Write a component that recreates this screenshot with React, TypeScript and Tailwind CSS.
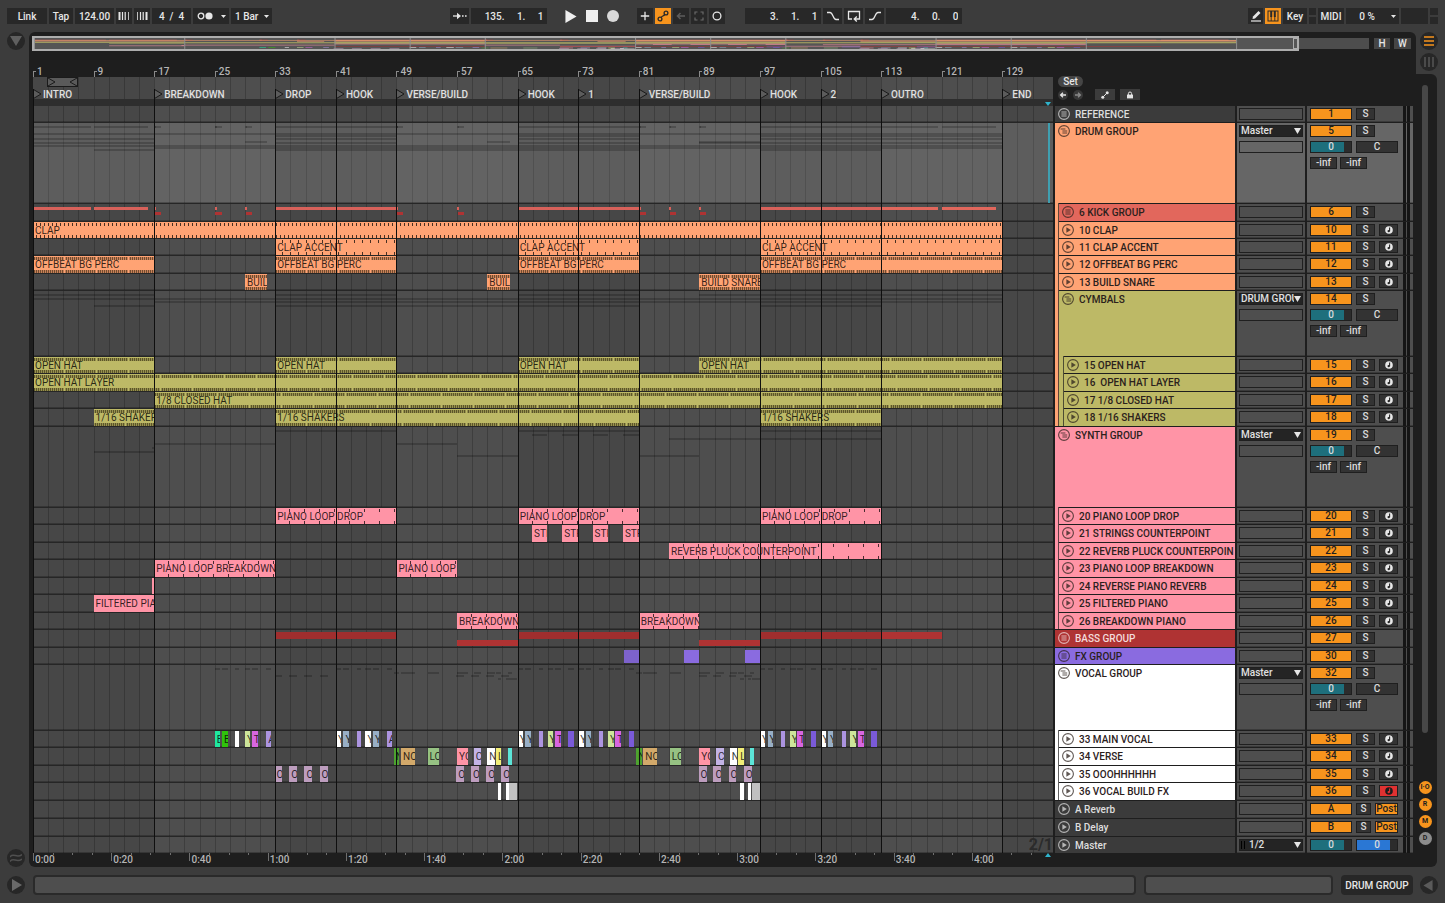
import { useState } from "react";
import type { ReactNode } from "react";
import clsx from "clsx";

const TOTAL_BARS = 134.7; // bars visible across the timeline
const BARS_PER_SECOND = 124 / 60 / 4;

const ORANGE = "#ffa374";
const OLIVE = "#bdb966";
const PINK = "#ff94a6";
const RED = "#af3333";
const RED_DIM = "#a02e2e";
const VIOLET = "#8a6be0";
const LILAC = "#bd9dbe";
const LAVENDER = "#ac94e0";
const STEEL = "#98afc6";
const LIME = "#cde59a";
const MAGENTA = "#d866e0";

type TickKind = "half" | "bar" | "two" | "dense";

type Clip = {
  from: number;
  to: number;
  label?: string;
  color?: string;
  // thin clips inside a folded group
  slot?: "kickHigh" | "kickLow" | "bassHigh" | "bassLow" | "fx";
};

type Track = {
  id: string;
  name: string;
  color: string;
  text?: string;
  height: string;
  kind: "folded" | "group" | "track" | "return" | "master";
  parents?: string[];
  selected?: boolean;
  output?: string;
  number: string;
  armed?: boolean;
  ticks?: TickKind;
  clips?: Clip[];
  ghosts?: [string, number][];
};

const spans = (label: string, list: [number, number][]): Clip[] => list.map(([from, to]) => ({ from, to, label }));

const kick = (bar: number): Clip[] => [
  { from: bar, to: bar + 0.25, slot: "kickHigh", color: "#d8615a" },
  { from: bar + 0.1, to: bar + 0.9, slot: "kickLow", color: RED },
];

const verse = (s: number): Clip[] => [
  { from: s - 0.35, to: s + 0.4, label: "N", color: "#4da32f" },
  { from: s + 0.6, to: s + 2.4, label: "NO", color: "#d3a96a" },
  { from: s + 4.1, to: s + 5.6, label: "LO", color: "#96c283" },
  { from: s + 8, to: s + 9.4, label: "YO", color: PINK },
  { from: s + 10.2, to: s + 11.2, label: "C", color: "#c3b3e6" },
  { from: s + 12, to: s + 12.95, label: "N", color: "#ffffff" },
  { from: s + 13.15, to: s + 13.85, label: "L", color: "#f2ee78" },
  { from: s + 14.7, to: s + 15.2, color: "#5ce5d8" },
];

const hook = (s: number): Clip[] => [
  { from: s, to: s + 0.7, label: "Y", color: "#ffffff" },
  { from: s + 1, to: s + 1.7, label: "Y", color: STEEL },
  { from: s + 2.8, to: s + 3.3, color: LAVENDER },
  { from: s + 3.95, to: s + 4.7, label: "Y", color: LIME },
  { from: s + 4.9, to: s + 5.7, label: "T", color: MAGENTA },
  { from: s + 6.7, to: s + 7.4, color: "#7a5ad8" },
];

const oohs = (s: number): Clip[] =>
  [0, 1.95, 3.95, 5.95].map((d) => ({ from: s - 0.1 + d, to: s + 0.95 + d, label: "O", color: LILAC }));

const buildFx = (s: number): Clip[] => [
  { from: s, to: s + 0.45, color: "#ffffff" },
  { from: s + 1, to: s + 1.4, color: "#ffffff" },
  { from: s + 1.5, to: s + 2.55, color: "#c0c0c0" },
];

const D = [ORANGE];
const C = [ORANGE, OLIVE];
const S = [PINK];
const V = ["#ffffff"];

const tracks: Track[] = [
  { id: "ref", name: "REFERENCE", color: "#3b3b3b", text: "#dedede", height: "h-[16px]", kind: "folded", number: "1" },
  {
    id: "drum", name: "DRUM GROUP", color: ORANGE, height: "h-[81px]", kind: "group", selected: true, output: "Master", number: "5",
    ghosts: [["kick", 3], ["clap", 10], ["accent", 12], ["offbeat", 15], ["snare", 18], ["open", 19], ["layer", 22], ["closed", 24], ["shakers", 26]],
  },
  {
    id: "kick", name: "6 KICK GROUP", color: "#e2675c", height: "h-[18px]", kind: "folded", parents: D, number: "6",
    clips: [
      { from: 1, to: 8.65, slot: "kickHigh", color: "#d8615a" },
      { from: 9, to: 16.2, slot: "kickHigh", color: "#d8615a" },
      ...kick(17), ...kick(25), ...kick(29),
      { from: 33, to: 49.2, slot: "kickHigh", color: "#d8615a" },
      ...kick(49), ...kick(57),
      { from: 65, to: 81.2, slot: "kickHigh", color: "#d8615a" },
      ...kick(81), ...kick(85), ...kick(89),
      { from: 97, to: 113, slot: "kickHigh", color: "#d8615a" },
      { from: 113, to: 120.5, slot: "kickHigh", color: "#e2675c" },
      { from: 121, to: 128.2, slot: "kickHigh", color: "#e2675c" },
    ],
  },
  { id: "clap", name: "10 CLAP", color: ORANGE, height: "h-[17px]", kind: "track", parents: D, number: "10", ticks: "half", clips: spans("CLAP", [[1, 129]]) },
  { id: "accent", name: "11 CLAP ACCENT", color: ORANGE, height: "h-[17px]", kind: "track", parents: D, number: "11", ticks: "bar", clips: spans("CLAP ACCENT", [[33, 49], [65, 81], [97, 129]]) },
  { id: "offbeat", name: "12 OFFBEAT BG PERC", color: ORANGE, height: "h-[18px]", kind: "track", parents: D, number: "12", ticks: "dense", clips: spans("OFFBEAT BG PERC", [[1, 17], [33, 49], [65, 81], [97, 129]]) },
  { id: "snare", name: "13 BUILD SNARE", color: ORANGE, height: "h-[17px]", kind: "track", parents: D, number: "13", ticks: "dense", clips: [...spans("BUIL", [[29, 31.9], [61, 64]]), ...spans("BUILD SNARE", [[89, 97]])] },
  {
    id: "cymbals", name: "CYMBALS", color: OLIVE, height: "h-[66px]", kind: "group", parents: D, output: "DRUM GROUP", number: "14",
    ghosts: [["open", 3], ["layer", 7], ["closed", 10], ["shakers", 14]],
  },
  { id: "open", name: "15 OPEN HAT", color: OLIVE, height: "h-[17px]", kind: "track", parents: C, number: "15", ticks: "dense", clips: spans("OPEN HAT", [[1, 17], [33, 49], [65, 81], [89, 129]]) },
  { id: "layer", name: "16  OPEN HAT LAYER", color: OLIVE, height: "h-[18px]", kind: "track", parents: C, number: "16", ticks: "dense", clips: spans("OPEN HAT LAYER", [[1, 129]]) },
  { id: "closed", name: "17 1/8 CLOSED HAT", color: OLIVE, height: "h-[17px]", kind: "track", parents: C, number: "17", ticks: "dense", clips: spans("1/8 CLOSED HAT", [[17, 129]]) },
  { id: "shakers", name: "18 1/16 SHAKERS", color: OLIVE, height: "h-[18px]", kind: "track", parents: C, number: "18", ticks: "dense", clips: spans("1/16 SHAKERS", [[9, 17], [33, 81], [97, 113]]) },
  {
    id: "synth", name: "SYNTH GROUP", color: PINK, height: "h-[81px]", kind: "group", output: "Master", number: "19",
    ghosts: [["drop", 3], ["strings", 7], ["pluck", 11], ["breakdown", 16], ["reverse", 20], ["filtered", 24], ["piano", 28]],
  },
  { id: "drop", name: "20 PIANO LOOP DROP", color: PINK, height: "h-[17px]", kind: "track", parents: S, number: "20", ticks: "two", clips: spans("PIANO LOOP DROP", [[33, 49], [65, 81], [97, 113]]) },
  { id: "strings", name: "21 STRINGS COUNTERPOINT", color: PINK, height: "h-[18px]", kind: "track", parents: S, number: "21", clips: spans("STR", [[66.9, 68.9], [70.9, 73], [74.9, 76.9], [78.9, 81]]) },
  { id: "pluck", name: "22 REVERB PLUCK COUNTERPOIN", color: PINK, height: "h-[17px]", kind: "track", parents: S, number: "22", ticks: "two", clips: spans("REVERB PLUCK COUNTERPOINT", [[85, 113]]) },
  { id: "breakdown", name: "23 PIANO LOOP BREAKDOWN", color: PINK, height: "h-[18px]", kind: "track", parents: S, number: "23", ticks: "two", clips: [...spans("PIANO LOOP BREAKDOWN", [[17, 33]]), ...spans("PIANO LOOP", [[49, 57]])] },
  { id: "reverse", name: "24 REVERSE PIANO REVERB", color: PINK, height: "h-[17px]", kind: "track", parents: S, number: "24", clips: [{ from: 16.7, to: 17 }] },
  { id: "filtered", name: "25 FILTERED PIANO", color: PINK, height: "h-[18px]", kind: "track", parents: S, number: "25", clips: spans("FILTERED PIA", [[9, 17]]) },
  { id: "piano", name: "26 BREAKDOWN PIANO", color: PINK, height: "h-[17px]", kind: "track", parents: S, number: "26", ticks: "two", clips: spans("BREAKDOWN", [[57, 65], [81, 89]]) },
  {
    id: "bass", name: "BASS GROUP", color: RED, text: "#f3dcdc", height: "h-[18px]", kind: "folded", number: "27",
    clips: [
      { from: 33, to: 49, slot: "bassHigh", color: RED_DIM },
      { from: 57, to: 65, slot: "bassLow", color: RED },
      { from: 65, to: 81, slot: "bassHigh", color: RED_DIM },
      { from: 89, to: 97, slot: "bassLow", color: RED },
      { from: 97, to: 113, slot: "bassHigh", color: RED_DIM },
      { from: 113, to: 121, slot: "bassHigh", color: RED },
    ],
  },
  {
    id: "fx", name: "FX GROUP", color: VIOLET, height: "h-[17px]", kind: "folded", number: "30",
    clips: [
      { from: 79, to: 81, slot: "fx", color: "#7d62cc" },
      { from: 87, to: 89, slot: "fx", color: VIOLET },
      { from: 95, to: 97, slot: "fx", color: VIOLET },
    ],
  },
  {
    id: "vocal", name: "VOCAL GROUP", color: "#ffffff", height: "h-[66px]", kind: "group", output: "Master", number: "32",
    ghosts: [["main", 3], ["verse", 7], ["oooh", 10], ["vfx", 13]],
  },
  {
    id: "main", name: "33 MAIN VOCAL", color: "#ffffff", height: "h-[17px]", kind: "track", parents: V, number: "33",
    clips: [
      { from: 25, to: 25.7, label: "E", color: "#1fe8a0" },
      { from: 25.95, to: 26.7, label: "E", color: "#2fc40a" },
      { from: 27.7, to: 28.15, color: "#ffffff" },
      { from: 29, to: 29.7, label: "Y", color: LIME },
      { from: 29.9, to: 30.65, label: "T", color: MAGENTA },
      { from: 31.8, to: 32.4, label: "A", color: LAVENDER },
      { from: 41, to: 41.7, label: "Y", color: "#ffffff" },
      { from: 42, to: 42.7, label: "Y", color: STEEL },
      { from: 43.8, to: 44.3, color: LAVENDER },
      { from: 44.9, to: 45.7, label: "Y", color: "#ffffff" },
      { from: 45.9, to: 46.7, label: "Y", color: STEEL },
      { from: 47.7, to: 48.4, label: "A", color: LAVENDER },
      ...hook(65), ...hook(73), ...hook(97), ...hook(105),
    ],
  },
  { id: "verse", name: "34 VERSE", color: "#ffffff", height: "h-[18px]", kind: "track", parents: V, number: "34", clips: [...verse(49), ...verse(81)] },
  { id: "oooh", name: "35 OOOHHHHHH", color: "#ffffff", height: "h-[17px]", kind: "track", parents: V, number: "35", clips: [...oohs(33), ...oohs(57), ...oohs(89)] },
  { id: "vfx", name: "36 VOCAL BUILD FX", color: "#ffffff", height: "h-[18px]", kind: "track", parents: V, number: "36", armed: true, clips: [...buildFx(62.4), ...buildFx(94.4)] },
  { id: "a", name: "A Reverb", color: "#3b3b3b", text: "#dedede", height: "h-[18px]", kind: "return", number: "A" },
  { id: "b", name: "B Delay", color: "#3b3b3b", text: "#dedede", height: "h-[18px]", kind: "return", number: "B" },
  { id: "master", name: "Master", color: "#3b3b3b", text: "#dedede", height: "h-[17px]", kind: "master", number: "0" },
];

const locators: [number, string][] = [
  [1, "INTRO"], [17, "BREAKDOWN"], [33, "DROP"], [41, "HOOK"], [49, "VERSE/BUILD"], [65, "HOOK"],
  [73, "1"], [81, "VERSE/BUILD"], [97, "HOOK"], [105, "2"], [113, "OUTRO"], [129, "END"],
];

const darkBands: [number, number][] = [[1, 17], [33, 49], [65, 81], [97, 113], [129, 1 + TOTAL_BARS]];
const gridBars = Array.from({ length: 67 }, (_, i) => 3 + i * 2).filter((b) => b < TOTAL_BARS);
const rulerBars = Array.from({ length: 17 }, (_, i) => 1 + i * 8);
const seconds = Array.from({ length: 52 }, (_, i) => i * 5);

const width = (bars: number) => `${(bars / TOTAL_BARS) * 100}%`;
const at = (bar: number) => width(bar - 1);

/* ---------- icons ---------- */

function TrackIcon({ kind }: { kind: Track["kind"] }) {
  return (
    <svg viewBox="0 0 12 12" className="size-3 shrink-0 opacity-75" fill="none" stroke="currentColor">
      <circle cx="6" cy="6" r="5.4" strokeWidth="1.1" />
      {kind === "folded" && <path d="M3.4 4h5.2M3.4 6h5.2M3.4 8h5.2" strokeWidth="1.1" />}
      {kind === "group" && <path d="M2.6 4h4.8M4.4 6h4.8M4.4 8h4.8" strokeWidth="1.1" />}
      {kind !== "folded" && kind !== "group" && <path d="M4.4 3.3L8.8 6L4.4 8.7z" fill="currentColor" stroke="none" />}
    </svg>
  );
}

function NoteIcon({ dark }: { dark?: boolean }) {
  return (
    <svg viewBox="0 0 8 8" className="size-2">
      <circle cx="4" cy="4" r="3.8" fill={dark ? "#1c1c1c" : "#e8e8e8"} />
      <path d="M4.6 1.6v3.6" stroke={dark ? "#e03131" : "#262626"} strokeWidth="1.1" />
      <circle cx="3.7" cy="5.1" r="1.2" fill={dark ? "#e03131" : "#262626"} />
    </svg>
  );
}

function Caret({ className }: { className?: string }) {
  return (
    <svg viewBox="0 0 8 7" preserveAspectRatio="none" className={clsx("pointer-events-none absolute", className)}>
      <path d="M0 0h8L4 7z" fill="#e6e6e6" />
    </svg>
  );
}

/* ---------- transport bar ---------- */

function BarButton({ label, className, children }: { label?: string; className: string; children?: ReactNode }) {
  return (
    <button aria-label={label} className={clsx("flex h-4 shrink-0 items-center justify-center", className)}>
      {children}
    </button>
  );
}

function BarInput({ label, value, className }: { label: string; value: string; className: string }) {
  return <input aria-label={label} defaultValue={value} className={clsx("h-4 shrink-0 bg-[#282828] outline-none", className)} />;
}

const stroke = { fill: "none", stroke: "#e6e6e6", strokeWidth: 1.3 };

function Transport() {
  return (
    <header className="flex h-8 items-center px-[7px] text-[#e6e6e6]">
      <div className="flex gap-[2px]">
        <BarButton className="w-10 bg-[#282828]">Link</BarButton>
        <BarButton className="w-6 bg-[#282828]">Tap</BarButton>
        <BarInput label="Tempo" value="124.00" className="w-[39px] text-center" />
        <BarButton label="Nudge down" className="w-4 bg-[#282828]">
          <svg viewBox="0 0 12 10" className="h-[10px] w-3" stroke="#e6e6e6">
            <path d="M1.5 1v8" strokeWidth="2" /><path d="M4.5 1v8M7.2 1v8" strokeWidth="1.2" /><path d="M10.5 1v8" strokeWidth=".8" />
          </svg>
        </BarButton>
        <BarButton label="Nudge up" className="w-4 bg-[#282828]">
          <svg viewBox="0 0 12 10" className="h-[10px] w-3" stroke="#e6e6e6">
            <path d="M1.5 1v8" strokeWidth=".8" /><path d="M4.5 1v8M7.2 1v8" strokeWidth="1.2" /><path d="M10.5 1v8" strokeWidth="2" />
          </svg>
        </BarButton>
        <BarInput label="Time signature" value="4  /  4" className="w-[39px] text-center" />
        <BarButton label="Metronome" className="relative w-9 bg-[#282828]">
          <svg viewBox="0 0 16 8" className="mr-3 h-2 w-4">
            <circle cx="4" cy="4" r="2.8" {...stroke} /><circle cx="12" cy="4" r="3.6" fill="#e6e6e6" />
          </svg>
          <Caret className="top-[7px] right-[3px] h-[3px] w-[5px]" />
        </BarButton>
        <div className="relative">
          <select aria-label="Quantization" className="h-4 w-[41px] appearance-none bg-[#282828] pl-1 outline-none">
            <option>1 Bar</option>
          </select>
          <Caret className="top-[7px] right-[3px] h-[3px] w-[5px]" />
        </div>
      </div>
      <div className="flex-5" />
      <div className="flex items-center gap-[2px]">
        <BarButton label="Follow" className="w-[19px] bg-[#282828]">
          <svg viewBox="0 0 14 8" className="h-2 w-[14px]" {...stroke}>
            <path d="M0 4h4" /><path d="M4 .8L8 4L4 7.2z" fill="#e6e6e6" stroke="none" /><path d="M9 4h1.6M12 4h1.6" />
          </svg>
        </BarButton>
        <BarInput label="Arrangement position" value="135.     1.     1" className="w-[76px] pr-1 text-right" />
        <BarButton label="Play" className="ml-[14px] w-4">
          <svg viewBox="0 0 12 14" className="h-[13px] w-3"><path d="M0 0l12 7L0 14z" fill="#efefef" /></svg>
        </BarButton>
        <BarButton label="Stop" className="ml-[3px] w-4"><span className="size-3 bg-[#efefef]" /></BarButton>
        <BarButton label="Record" className="ml-[3px] w-4"><span className="size-3 rounded-full bg-[#d9d9d9]" /></BarButton>
        <BarButton label="Overdub" className="ml-[14px] w-4 bg-[#282828]">
          <svg viewBox="0 0 10 10" className="size-[10px]" {...stroke}><path d="M5 .8v8.4M.8 5h8.4" /></svg>
        </BarButton>
        <BarButton label="Automation arm" className="w-4 bg-[#f7941d]">
          <svg viewBox="0 0 12 12" className="size-3" fill="none" stroke="#2a2a2a" strokeWidth="1.3">
            <circle cx="3" cy="9" r="1.9" /><circle cx="9" cy="3" r="1.9" /><path d="M4.2 7.6C5 5.4 6.6 6.6 7.7 4.4" />
          </svg>
        </BarButton>
        <BarButton label="Re-enable automation" className="w-4 bg-[#282828]">
          <svg viewBox="0 0 10 8" className="h-2 w-[10px]" fill="none" stroke="#5c5c5c" strokeWidth="1.5"><path d="M9 4H2M4.5 1L1.5 4l3 3" /></svg>
        </BarButton>
        <BarButton label="Capture" className="w-4 bg-[#282828]">
          <svg viewBox="0 0 10 10" className="size-[10px]" fill="none" stroke="#6a6a6a" strokeWidth="1.2">
            <path d="M1 3.5V1h2.5M6.5 1H9v2.5M9 6.5V9H6.5M3.5 9H1V6.5" />
          </svg>
        </BarButton>
        <BarButton label="Session record" className="w-4 bg-[#282828]">
          <svg viewBox="0 0 10 10" className="size-[10px]" {...stroke}><circle cx="5" cy="5" r="3.9" /></svg>
        </BarButton>
      </div>
      <div className="ml-5 flex gap-[2px]">
        <BarInput label="Loop start" value="3.     1.     1" className="w-[76px] pr-1 text-right" />
        <BarButton label="Punch in" className="w-[19px] bg-[#282828]">
          <svg viewBox="0 0 14 10" className="h-[10px] w-[14px]" {...stroke}><path d="M1 1.5h3c3 0 3 7 6 7h3" /></svg>
        </BarButton>
        <BarButton label="Loop" className="w-[19px] bg-[#282828]">
          <svg viewBox="0 0 14 12" className="h-3 w-[14px]" {...stroke}><path d="M5 9H1.5V1.5h11V9H8M9.8 6.6L7.2 9l2.6 2.4" /></svg>
        </BarButton>
        <BarButton label="Punch out" className="w-[19px] bg-[#282828]">
          <svg viewBox="0 0 14 10" className="h-[10px] w-[14px]" {...stroke}><path d="M1 8.5h3c3 0 3-7 6-7h3" /></svg>
        </BarButton>
        <BarInput label="Loop length" value="4.     0.     0" className="w-[76px] pr-1 text-right" />
      </div>
      <div className="flex-8" />
      <div className="flex gap-[2px]">
        <BarButton label="Draw mode" className="w-[15px] bg-[#282828]">
          <svg viewBox="0 0 12 12" className="size-3"><path d="M2.5 9L3 6.5L8.5 1l2 2L5 8.5z" fill="#e6e6e6" /><path d="M1 11h10" stroke="#e6e6e6" strokeWidth="1.2" /></svg>
        </BarButton>
        <BarButton label="Computer keyboard" className="w-4 bg-[#f7941d]">
          <svg viewBox="0 0 12 12" className="size-3" fill="none" stroke="#2a2a2a">
            <rect x="1" y="1" width="10" height="10" strokeWidth="1" /><path d="M4.2 1v6M7.8 1v6" strokeWidth="2" /><path d="M4.2 6v5M7.8 6v5" strokeWidth=".9" />
          </svg>
        </BarButton>
        <BarButton className="w-6 bg-[#282828]">Key</BarButton>
        <div className="flex w-[7px] flex-col gap-[2px]"><span className="flex-1 bg-[#282828]" /><span className="flex-1 bg-[#282828]" /></div>
        <BarButton className="w-[26px] bg-[#282828]">MIDI</BarButton>
        <BarButton className="relative w-[53px] bg-[#282828] pr-[11px]">
          0 %
          <Caret className="top-[7px] right-[3px] h-[3px] w-[5px]" />
        </BarButton>
        <div className="w-[27px] bg-[#282828]" />
        <div className="flex w-2 flex-col gap-[2px]"><span className="flex-1 bg-[#282828]" /><span className="flex-1 bg-[#282828]" /></div>
      </div>
    </header>
  );
}

/* ---------- overview ---------- */

function Overview() {
  const scale = 9.4;
  return (
    <div className="flex h-[15px] items-center pl-[3px]">
      <div className="relative h-[15px] flex-18 border-2 border-[#adadad] bg-[#555555]">
        <svg viewBox="0 0 1264 11" preserveAspectRatio="none" className="block h-full w-full">
          {tracks.map((t, i) =>
            t.clips?.map((c, j) => (
              <rect key={`${t.id}${j}`} x={(c.from - 1) * scale} y={1 + i * 0.36} width={(c.to - c.from) * scale} height="0.7" fill={c.color ?? t.color} opacity="0.7" />
            ))
          )}
          {locators.map(([bar]) => (
            <rect key={bar} x={(bar - 1) * scale} y="0" width="1" height="11" fill="#8f8f8f" />
          ))}
        </svg>
        <span className="absolute inset-y-0 right-0 w-1 border-y border-l border-[#adadad]" />
      </div>
      <div className="h-[11px] flex-1 bg-[#4d4d4d]" />
      <button className="ml-[5px] h-[11px] w-4 bg-[#454545] leading-[11px] text-[#e6e6e6]">H</button>
      <button className="mr-[5px] ml-1 h-[11px] w-[17px] bg-[#454545] leading-[11px] text-[#e6e6e6]">W</button>
    </div>
  );
}

/* ---------- timeline ---------- */

const tickBand: Record<TickKind, string> = {
  half: "bg-[repeating-linear-gradient(90deg,transparent_0_3px,#4a3022_3px_4px)]",
  bar: "bg-[repeating-linear-gradient(90deg,transparent_0_7px,#4a3022_7px_8px)]",
  two: "bg-[repeating-linear-gradient(90deg,transparent_0_14px,#4a2a30_14px_15px)]",
  dense:
    "bg-[repeating-linear-gradient(90deg,rgba(40,30,10,.25)_0_1px,rgba(40,30,10,.65)_1px_2px)] [mask-image:repeating-linear-gradient(90deg,#000_0_31px,transparent_31px_32px)]",
};

const slots = {
  kickHigh: "top-[3px] h-[3px]",
  kickLow: "top-[8px] h-[3px]",
  bassHigh: "top-[2px] h-[7px]",
  bassLow: "top-[10px] h-[6px]",
  fx: "top-[2px] h-[13px]",
};

function ClipBlock({ clip, track }: { clip: Clip; track: Track }) {
  return (
    <div
      className={clsx("absolute overflow-hidden font-normal whitespace-pre text-black/80", clip.slot ? slots[clip.slot] : "inset-y-0")}
      style={{ left: at(clip.from), width: width(clip.to - clip.from), backgroundColor: clip.color ?? track.color }}
    >
      {track.ticks && (
        <>
          <span className={clsx("absolute inset-x-0 top-[1px] h-[3px]", tickBand[track.ticks])} />
          <span className={clsx("absolute inset-x-0 bottom-0 h-[3px]", tickBand[track.ticks])} />
        </>
      )}
      {clip.label && <span className="relative block pt-px pl-[2px] leading-4">{clip.label}</span>}
    </div>
  );
}

function Lane({ track }: { track: Track }) {
  return (
    <div className={clsx("relative border-[#262626] shadow-[inset_0_-1px_rgba(0,0,0,.25)]", track.height, track.id !== "ref" && "border-t", track.selected && "bg-white/12")}>
      {track.ghosts?.map(([id, top]) =>
        tracks.find((t) => t.id === id)?.clips?.map((c, i) => (
          <span key={id + i} className="absolute h-[2px] bg-black/20" style={{ top, left: at(c.from), width: width(c.to - c.from) }} />
        ))
      )}
      {track.clips?.map((c, i) => <ClipBlock key={i} clip={c} track={track} />)}
      {track.selected && <span className="absolute inset-y-0 w-[2px] bg-[#3f9fb0]" style={{ left: at(135) }} />}
      {track.kind === "master" && <span className="absolute right-0 bottom-0 text-[16px] leading-4 font-bold text-[#2b2b2b]">2/1</span>}
    </div>
  );
}

function Timeline() {
  return (
    <section aria-label="Arrangement" className="min-w-0 flex-1">
      <div className="relative h-[26px] overflow-hidden text-[#b5b5b5]">
        {rulerBars.map((bar) => (
          <span key={bar} className="absolute bottom-0 h-[6px] border-l border-[#8a8a8a]" style={{ left: at(bar) }}>
            <span className="absolute bottom-0 left-[3px] leading-[10px]">{bar}</span>
            <span className="absolute top-0 left-0 h-px w-[2px] bg-[#8a8a8a]" />
          </span>
        ))}
      </div>
      <div className="relative bg-[#4e4e4e]">
        {darkBands.map(([from, to]) => (
          <span key={from} className="absolute inset-y-0 bg-[#474747]" style={{ left: at(from), width: width(to - from) }} />
        ))}
        {gridBars.map((bar) => (
          <span key={bar} className="absolute inset-y-0 w-px bg-black/20" style={{ left: at(bar) }} />
        ))}
        <div className="relative h-[22px] text-[#e0e0e0]">
          <svg viewBox="0 0 31 10" className="absolute top-0 h-[10px] w-[31px]" style={{ left: at(2.9) }} fill="#5a5a5a" stroke="#1a1a1a">
            <rect x=".5" y=".5" width="30" height="9" />
            <path d="M1 1l7 4l-7 4M30 1l-7 4l7 4" fill="none" />
          </svg>
          {locators.map(([bar, name]) => (
            <span key={bar} className="absolute bottom-0 flex h-[10px] items-center leading-3 whitespace-nowrap" style={{ left: at(bar) }}>
              <svg viewBox="0 0 9 10" className="mr-px h-[10px] w-[9px]">
                <path d="M.5 .5L8 5L.5 9.5z" fill="#5c5c5c" stroke="#1a1a1a" />
              </svg>
              <span className="pt-px">{name}</span>
            </span>
          ))}
        </div>
        <div className="relative h-[7px] bg-[#2e2e2e]">
          <svg viewBox="0 0 6 4" className="absolute bottom-0 h-1 w-[6px]" style={{ left: at(134.6) }}><path d="M0 0h6L3 4z" fill="#2fb4cc" /></svg>
        </div>
        {tracks.map((t) => <Lane key={t.id} track={t} />)}
        {locators.map(([bar]) => (
          <span key={bar} className="pointer-events-none absolute top-[12px] bottom-0 w-px bg-[#0f0f0f]" style={{ left: at(bar) }} />
        ))}
      </div>
      <div className="relative h-[14px] overflow-hidden text-[#b5b5b5]">
        {seconds.map((s) => (
          <span
            key={s}
            className={clsx("absolute top-0 border-l border-[#6f6f6f]", s % 20 === 0 ? "h-2" : "h-[2px]")}
            style={{ left: width(s * BARS_PER_SECOND) }}
          >
            {s % 20 === 0 && (
              <span className="absolute top-[2px] left-px leading-[10px]">{`${Math.floor(s / 60)}:${String(s % 60).padStart(2, "0")}`}</span>
            )}
          </span>
        ))}
        <svg viewBox="0 0 6 4" className="absolute top-0 h-1 w-[6px]" style={{ left: at(134.6) }}><path d="M0 4h6L3 0z" fill="#2fb4cc" /></svg>
      </div>
    </section>
  );
}

/* ---------- track headers ---------- */

const box = "h-3 border border-[#1f1f1f] leading-[10px]";

function Fader({ label, fill, className }: { label: string; fill: string; className?: string }) {
  return (
    <label className={clsx(box, "relative block w-[42px] bg-[#2c2c2c] text-center text-[#dcdcdc]", className)}>
      <span className={clsx("absolute inset-y-0 left-0 w-5/6", fill)} />
      <span className="relative">0</span>
      <input type="range" aria-label={label} className="absolute inset-0 h-full w-full opacity-0" />
    </label>
  );
}

function Output({ track }: { track: Track }) {
  const value = track.kind === "master" ? "1/2" : track.output;
  if (!value) return <div className={clsx(box, "w-16")} />;
  return (
    <div className="relative">
      <select
        aria-label={`${track.name} output`}
        className={clsx(box, "block w-16 appearance-none overflow-hidden bg-[#242424] pr-2 text-[#e0e0e0] outline-none", track.kind === "master" ? "pl-[9px]" : "pl-[1px]")}
      >
        <option>{value}</option>
      </select>
      {track.kind === "master" && <span className="absolute top-[2px] left-[2px] h-2 w-1 border-x border-black" />}
      <Caret className="top-[3px] right-[2px] h-[6px] w-[7px]" />
    </div>
  );
}

function HeaderRow({ track }: { track: Track }) {
  const [on, setOn] = useState(true);
  const isGroup = track.kind === "group";
  const line = track.id === "ref" ? "border-[#1e1e1e]" : "border-t border-[#1e1e1e]";
  const cell = clsx(line, "shadow-[inset_0_-1px_rgba(0,0,0,.25)]", track.selected ? "bg-[#666666]" : "bg-[#4e4e4e]");

  return (
    <div className={clsx("flex gap-[2px]", track.height)}>
      <div className="flex w-[180px]">
        {track.parents?.map((color, i) => (
          <span key={color} className={clsx("shrink-0 border-r border-[#1e1e1e]/70", i === 0 ? "w-1" : "w-[5px]")} style={{ backgroundColor: color }} />
        ))}
        <div className={clsx("min-w-0 flex-1", line)} style={{ backgroundColor: track.color, color: track.text ?? "#2b211c" }}>
          <div className="flex h-4 items-center gap-[5px] overflow-hidden pl-[3px] whitespace-pre">
            <TrackIcon kind={track.kind} />
            {track.name}
          </div>
        </div>
      </div>

      <div className={clsx("flex w-[68px] flex-col gap-1 px-[2px] pt-[2px]", cell)}>
        <Output track={track} />
        {isGroup && <div className={clsx(box, "w-16")} />}
      </div>

      <div className={clsx("flex w-[106px] justify-between px-[3px]", cell)}>
        <div className="flex flex-col gap-1 pt-[2px]">
          {track.kind === "master" ? (
            <div className="flex gap-1">
              <Fader label="Master volume" fill="bg-[#1e6f7c]" />
              <Fader label="Cue volume" fill="bg-[#2a77d4]" />
            </div>
          ) : (
            <div className="flex gap-1">
              <button onClick={() => setOn(!on)} className={clsx(box, "w-[42px] text-[#1f1f1f]", on ? "bg-[#f7941d]" : "bg-[#4e4e4e]")}>
                {track.number}
              </button>
              <button className={clsx(box, "bg-[#333333] text-[#dcdcdc]", track.kind === "return" ? "w-[15px]" : "w-[19px]")}>S</button>
              {track.kind === "track" && (
                <button aria-label={`Arm ${track.name}`} className={clsx(box, "flex w-[19px] items-center justify-center", track.armed ? "bg-[#e03131]" : "bg-[#333333]")}>
                  <NoteIcon dark={track.armed} />
                </button>
              )}
              {track.kind === "return" && <button className={clsx(box, "w-[23px] bg-[#f7941d] text-[#1f1f1f]")}>Post</button>}
            </div>
          )}
          {isGroup && (
            <>
              <div className="flex gap-1">
                <Fader label={`${track.name} volume`} fill="bg-[#1e6f7c]" />
                <button className={clsx(box, "w-[42px] bg-[#333333] text-[#dcdcdc]")}>C</button>
              </div>
              <div className="flex gap-[3px]">
                <button className={clsx(box, "w-[27px] bg-[#333333] text-[#dcdcdc]")}>-inf</button>
                <button className={clsx(box, "w-[27px] bg-[#333333] text-[#dcdcdc]")}>-inf</button>
              </div>
            </>
          )}
        </div>
        <div className="flex gap-px">
          <span className="w-[3px] bg-[#151515]" />
          <span className="w-[3px] bg-[#151515]" />
        </div>
      </div>
    </div>
  );
}

function Headers() {
  return (
    <section aria-label="Tracks" className="ml-[2px] w-[358px] shrink-0">
      <div className="h-[55px] pt-[25px] pl-[3px] text-[#e6e6e6]">
        <button className="block h-[11px] w-[25px] rounded-full bg-[#454545] leading-[11px]">Set</button>
        <div className="mt-[2px] flex items-center">
          <button aria-label="Previous locator" className="flex size-[10px] items-center justify-center rounded-full bg-[#383838]">
            <svg viewBox="0 0 8 8" className="size-2" fill="none" stroke="#e6e6e6" strokeWidth="1.3"><path d="M7 4H2M4 1.8L1.6 4L4 6.2" /></svg>
          </button>
          <button aria-label="Next locator" className="ml-[5px] flex size-[10px] items-center justify-center rounded-full bg-[#383838]">
            <svg viewBox="0 0 8 8" className="size-2" fill="none" stroke="#8a8a8a" strokeWidth="1.3"><path d="M1 4h5M4 1.8L6.4 4L4 6.2" /></svg>
          </button>
          <button aria-label="Automation mode" className="ml-3 flex h-[11px] w-5 items-center justify-center bg-[#3c3c3c]">
            <svg viewBox="0 0 8 8" className="size-2"><path d="M1.6 6.4L6.4 1.6" stroke="#e6e6e6" /><circle cx="1.8" cy="6.2" r="1.5" fill="#e6e6e6" /><circle cx="6.2" cy="1.8" r="1.5" fill="#e6e6e6" /></svg>
          </button>
          <button aria-label="Lock envelopes" className="ml-[5px] flex h-[11px] w-5 items-center justify-center bg-[#3c3c3c]">
            <svg viewBox="0 0 8 8" className="size-2"><rect x="1" y="3.6" width="6" height="3.8" fill="#e6e6e6" /><path d="M2.4 4V2.6a1.6 1.6 0 0 1 3.2 0V4" fill="none" stroke="#e6e6e6" /></svg>
          </button>
        </div>
      </div>
      {tracks.map((t) => <HeaderRow key={t.id} track={t} />)}
    </section>
  );
}

function RoundButton({ label, children }: { label: string; children: ReactNode }) {
  return (
    <button aria-label={label} className="flex size-[18px] shrink-0 items-center justify-center rounded-full bg-[#272727]">
      {children}
    </button>
  );
}

const sections = [
  { label: "I·O", on: true },
  { label: "R", on: true },
  { label: "M", on: true },
  { label: "D", on: false },
];

export default function App() {
  return (
    <div className="flex min-h-screen flex-col bg-[#3c3c3c] font-[Roboto,sans-serif] text-[10px] font-medium">
      <Transport />

      <main className="flex">
        <aside className="flex w-[29px] shrink-0 flex-col items-center justify-between pl-[2px]">
          <RoundButton label="Show browser">
            <svg viewBox="0 0 12 10" className="h-[10px] w-3"><path d="M0 0h12L6 10z" fill="#5f5f5f" /></svg>
          </RoundButton>
          <RoundButton label="Groove pool">
            <svg viewBox="0 0 12 10" className="h-[10px] w-3" fill="none" stroke="#505050" strokeWidth="1.5">
              <path d="M0 4C3-1 7 6 12 1.5M0 8.5C3 3.500 7 10.500 12 6" />
            </svg>
          </RoundButton>
        </aside>

        <div className="min-w-0 flex-1 rounded-l-md rounded-tr-md bg-[#1e1e1e] pt-1">
          <Overview />
          <div className="flex pr-[3px] pl-1">
            <Timeline />
            <Headers />
          </div>
        </div>

        <aside className="flex w-[29px] shrink-0 flex-col">
          <div className="flex h-[42px] flex-col gap-[3px] pl-1">
            <RoundButton label="Arrangement view">
              <svg viewBox="0 0 10 10" className="size-[10px]" stroke="#f7941d" strokeWidth="1.6"><path d="M0 1h10M0 5h10M0 9h10" /></svg>
            </RoundButton>
            <RoundButton label="Session view">
              <svg viewBox="0 0 10 10" className="size-[10px]" stroke="#5a5a5a" strokeWidth="1.4"><path d="M1 0v10M5 0v10M9 0v10" /></svg>
            </RoundButton>
          </div>
          <div className="mr-2 flex flex-1 flex-col items-center rounded-r-md bg-[#1e1e1e] pt-[11px] pr-[3px] pb-[22px]">
            <div className="w-[6px] flex-1 rounded-full bg-[#474747]" />
            <div className="mt-12 flex flex-col gap-1">
              {sections.map((s) => (
                <button
                  key={s.label}
                  className={clsx("size-[13px] rounded-full text-[7px] leading-[13px] font-bold text-[#1e1e1e]", s.on ? "bg-[#f7941d]" : "bg-[#8c8c8c]")}
                >
                  {s.label}
                </button>
              ))}
            </div>
          </div>
        </aside>
      </main>

      <footer className="flex h-9 items-center px-[7px]">
        <RoundButton label="Preview">
          <svg viewBox="0 0 10 12" className="ml-[2px] h-3 w-[10px]"><path d="M0 0l10 6L0 12z" fill="#6a6a6a" /></svg>
        </RoundButton>
        <div className="ml-2 h-5 flex-1 rounded-sm border-2 border-[#2a2a2a] bg-[#4e4e4e]" />
        <div className="ml-2 h-5 w-[189px] rounded-sm border-2 border-[#2a2a2a] bg-[#4e4e4e]" />
        <button className="ml-2 h-5 w-[72px] rounded-sm bg-[#272727] text-[#e6e6e6]">DRUM GROUP</button>
        <span className="w-[7px]" />
        <RoundButton label="Show device view">
          <svg viewBox="0 0 10 12" className="mr-[2px] h-[11px] w-[10px]"><path d="M10 0L0 6l10 6z" fill="#5a5a5a" /></svg>
        </RoundButton>
      </footer>
    </div>
  );
}
